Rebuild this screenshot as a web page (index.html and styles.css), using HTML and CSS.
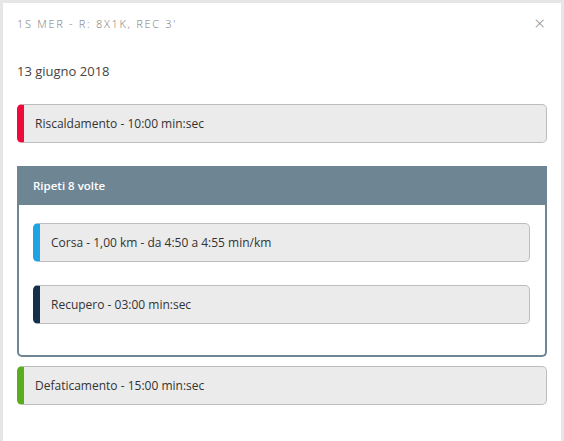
FILE: index.html
```html
<!DOCTYPE html>
<html lang="it">
<head>
<meta charset="utf-8">
<link rel="stylesheet" href="styles.css">
</head>
<body>
<div class="panel">
  <div class="header">
    <span class="title">1S MER - R: 8X1K, REC 3'</span>
    <span class="close">×</span>
  </div>
  <div class="date">13 giugno 2018</div>
  <div class="step step-warm">Riscaldamento - 10:00 min:sec</div>
  <div class="group">
    <div class="group-head">Ripeti 8 volte</div>
    <div class="group-body">
      <div class="step step-run">Corsa - 1,00 km - da 4:50 a 4:55 min/km</div>
      <div class="step step-rec">Recupero - 03:00 min:sec</div>
    </div>
  </div>
  <div class="step step-cool">Defaticamento - 15:00 min:sec</div>
</div>
</body>
</html>
```
FILE: styles.css
```css
html, body {
  margin: 0;
  height: 100%;
}
body {
  background: #e6e6e6;
  padding: 3px 3px 0 3px;
  box-sizing: border-box;
  font-family: "Open Sans", "Liberation Sans", sans-serif;
}
.panel {
  background: #fff;
  height: 100%;
  padding: 0 14px;
  box-sizing: border-box;
}
.header {
  display: flex;
  justify-content: space-between;
  align-items: center;
  height: 40px;
}
.title {
  font-size: 11px;
  letter-spacing: 1.7px;
  color: #7a7a7a;
  font-weight: 300;
}
.close {
  font-size: 19px;
  font-weight: 300;
  color: #8a8a8a;
  margin-right: 2px;
  line-height: 1;
}
.date {
  margin-top: 18px;
  font-size: 13px;
  color: #444;
  line-height: 20px;
}
.step {
  box-sizing: border-box;
  height: 39px;
  display: flex;
  align-items: center;
  padding-left: 11px;
  background: #ebebeb;
  border: 1px solid #bdbdbd;
  border-left: 7px solid;
  border-radius: 5px;
  font-size: 12px;
  color: #333;
}
.step-warm {
  margin-top: 23px;
  border-left-color: #ef0a3c;
}
.step-run {
  border-left-color: #1ea4e4;
}
.step-rec {
  margin-top: 23px;
  border-left-color: #15304a;
}
.step-cool {
  margin-top: 9px;
  border-left-color: #5aae1e;
}
.group {
  margin-top: 23px;
}
.group-head {
  background: #6e8594;
  height: 39px;
  box-sizing: border-box;
  display: flex;
  align-items: center;
  padding-left: 16px;
  color: #fff;
  font-size: 11.5px;
  font-weight: 600;
}
.group-body {
  border: 2px solid #6e8594;
  border-top: none;
  border-radius: 0 0 5px 5px;
  padding: 18px 15px 31px 14px;
}
```
